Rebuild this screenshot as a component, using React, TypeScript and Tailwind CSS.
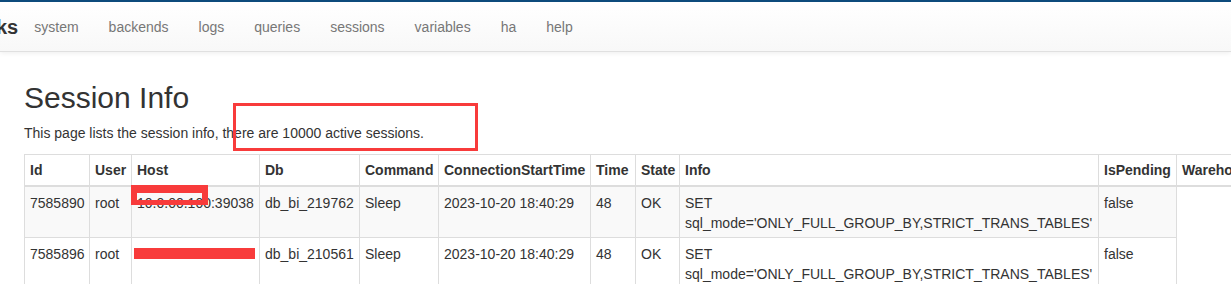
import React from 'react';

// --- Nav & table data ---
const navLinks = ['system', 'backends', 'logs', 'queries', 'sessions', 'variables', 'ha', 'help'];

const columns: { label: string; width: number }[] = [
  { label: 'Id', width: 65 },
  { label: 'User', width: 42 },
  { label: 'Host', width: 128 },
  { label: 'Db', width: 100 },
  { label: 'Command', width: 79 },
  { label: 'ConnectionStartTime', width: 152 },
  { label: 'Time', width: 45 },
  { label: 'State', width: 44 },
  { label: 'Info', width: 419 },
  { label: 'IsPending', width: 78 },
  { label: 'Warehouse', width: 110 },
];

type SessionRow = {
  id: string;
  user: string;
  host: string;
  db: string;
  command: string;
  startTime: string;
  time: string;
  state: string;
  info: string;
  isPending: string;
};

const sessions: SessionRow[] = [
  {
    id: '7585890',
    user: 'root',
    host: '10.0.00.100:39038',
    db: 'db_bi_219762',
    command: 'Sleep',
    startTime: '2023-10-20 18:40:29',
    time: '48',
    state: 'OK',
    info: "SET sql_mode='ONLY_FULL_GROUP_BY,STRICT_TRANS_TABLES'",
    isPending: 'false',
  },
  {
    id: '7585896',
    user: 'root',
    host: '',
    db: 'db_bi_210561',
    command: 'Sleep',
    startTime: '2023-10-20 18:40:29',
    time: '48',
    state: 'OK',
    info: "SET sql_mode='ONLY_FULL_GROUP_BY,STRICT_TRANS_TABLES'",
    isPending: 'false',
  },
];

const tableWidth = columns.reduce((sum, c) => sum + c.width, 0);

function Navbar() {
  return (
    <nav className="flex h-[52px] items-center border-t-2 border-b border-t-[#0d4b7c] border-b-[#e0e0e0] bg-linear-to-b from-white to-[#f8f8f8] shadow-[0_1px_5px_rgba(0,0,0,0.075)]">
      <span className="ml-[-4px] text-[20px] font-bold leading-[20px] text-[#333]">ks</span>
      <ul className="ml-[1px] flex">
        {navLinks.map((link) => (
          <li key={link} className="px-[15px] leading-[20px] text-[#777]">
            {link}
          </li>
        ))}
      </ul>
    </nav>
  );
}

function SessionTable() {
  return (
    <table
      className="table-fixed border-collapse border border-[#ddd] text-left"
      style={{ width: tableWidth }}
    >
      <colgroup>
        {columns.map((c) => (
          <col key={c.label} style={{ width: c.width }} />
        ))}
      </colgroup>
      <thead>
        <tr>
          {columns.map((c) => (
            <th
              key={c.label}
              className="overflow-hidden whitespace-nowrap border border-b-2 border-[#ddd] px-[5px] py-[5px] align-bottom font-bold leading-[20px]"
            >
              {c.label}
            </th>
          ))}
        </tr>
      </thead>
      <tbody>
        {sessions.map((s, i) => (
          <tr key={s.id} className={i % 2 === 0 ? 'bg-[#f9f9f9]' : 'bg-white'}>
            <td className="border border-[#ddd] px-[5px] pt-[6px] pb-[4px] align-top leading-[20px]">{s.id}</td>
            <td className="border border-[#ddd] px-[5px] pt-[6px] pb-[4px] align-top leading-[20px]">{s.user}</td>
            <td className="whitespace-nowrap border border-[#ddd] px-[5px] pt-[6px] pb-[4px] align-top leading-[20px]">{s.host}</td>
            <td className="border border-[#ddd] px-[5px] pt-[6px] pb-[4px] align-top leading-[20px]">{s.db}</td>
            <td className="border border-[#ddd] px-[5px] pt-[6px] pb-[4px] align-top leading-[20px]">{s.command}</td>
            <td className="border border-[#ddd] px-[5px] pt-[6px] pb-[4px] align-top leading-[20px]">{s.startTime}</td>
            <td className="border border-[#ddd] px-[5px] pt-[6px] pb-[4px] align-top leading-[20px]">{s.time}</td>
            <td className="border border-[#ddd] px-[5px] pt-[6px] pb-[4px] align-top leading-[20px]">{s.state}</td>
            <td className="border border-[#ddd] px-[5px] pt-[6px] pb-[4px] align-top leading-[20px]">{s.info}</td>
            <td className="border border-[#ddd] px-[5px] pt-[6px] pb-[4px] align-top leading-[20px]">{s.isPending}</td>
          </tr>
        ))}
      </tbody>
    </table>
  );
}

export default function App() {
  return (
    <div className="relative h-[284px] w-[1231px] overflow-hidden bg-white font-['Liberation_Sans',Arial,sans-serif] text-[14px] text-[#333]">
      <Navbar />
      <div className="px-[24px]">
        <h2 className="mt-[29px] mb-[9px] text-[30px] font-normal leading-[33px]">Session Info</h2>
        <p className="mb-[11px] leading-[20px]">
          This page lists the session info, there are 10000 active sessions.
        </p>
        <SessionTable />
      </div>

      {/* redaction / annotation marks over the screenshot */}
      <div className="absolute left-[233px] top-[103px] h-[48px] w-[245px] border-[3px] border-[#f83b3b]" />
      <div className="absolute left-[131px] top-[185px] h-[20px] w-[77px] border-t-[8px] border-r-[6px] border-b-[5px] border-l-[6px] border-[#f83b3b]" />
      <div className="absolute left-[134px] top-[248px] h-[11px] w-[121px] bg-[#f83b3b]" />
    </div>
  );
}
